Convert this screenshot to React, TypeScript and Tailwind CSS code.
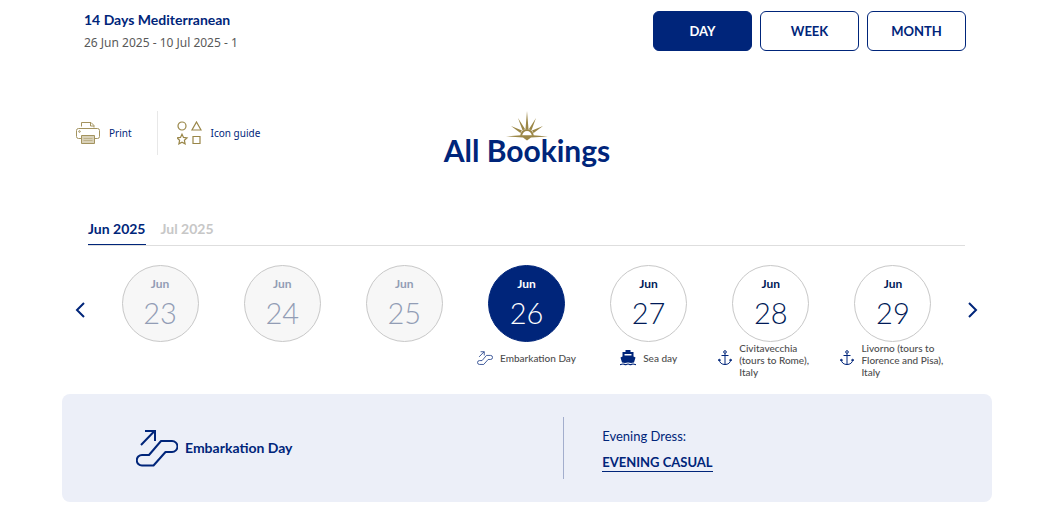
import React, { useState } from "react";

type IconProps = { className?: string };

function PrinterIcon({ className }: IconProps) {
  return (
    <svg className={className} viewBox="0 0 24 23" fill="none" stroke="#a3935f" strokeWidth="1" aria-hidden="true">
      <path d="M5.500 4.500v-4h9.500l3 3v2M14.500 0.500v3.500h3.500" />
      <path d="M5 16.500H2.500a2 2 0 0 1-2-2V8.500a2 2 0 0 1 2-2h19a2 2 0 0 1 2 2v6a2 2 0 0 1-2 2H19" />
      <path d="M5.500 13.500h13v8h-13z" fill="#d9d1b8" />
      <path d="M7.500 16.500h9M7.500 18.500h9" stroke="#bfb38c" />
      <circle cx="3.500" cy="9.500" r="0.800" />
    </svg>
  );
}

function ShapesIcon({ className }: IconProps) {
  return (
    <svg className={className} viewBox="0 0 25 24" fill="none" stroke="#998648" strokeWidth="1.200" aria-hidden="true">
      <circle cx="5" cy="5" r="4" />
      <path d="M19.500 1l4.500 8h-9z" />
      <path d="M5 13.200l1.500 3.200 3.500.5-2.600 2.400.7 3.600L5 21.200l-3.100 1.700.7-3.600L0 16.900l3.500-.5z" />
      <path d="M16 15.500h7v7h-7z" />
    </svg>
  );
}

function SunIcon({ className }: IconProps) {
  return (
    <svg className={className} viewBox="0 0 42 30" fill="#9b8747" aria-hidden="true">
      <path d="M0 25.500L15 24.300h12l15 1.200-17 1-4 3-4-3z" />
      <path d="M21 0l1.500 18h-3zM12 7l7 11-2.400 1.400zM30 7l-7 11 2.400 1.400zM5 15l11 4.500-1.600 2.600zM37 15l-11 4.500 1.600 2.600z" />
      <path d="M15.200 24.800a5.800 5.800 0 0 1 11.600 0" fill="none" stroke="#9b8747" strokeWidth="2" />
    </svg>
  );
}

function EscalatorIcon({ className }: IconProps) {
  return (
    <svg className={className} viewBox="0 0 42 38" fill="none" stroke="#00257a" strokeWidth="2" aria-hidden="true">
      <path d="M5 16L18.500 2M9 2h10v10" />
      <path d="M25 12h11a5 5 0 0 1 0 11h-6.500L17.500 36.500H6A5 5 0 0 1 6 26h7z" strokeLinejoin="round" />
    </svg>
  );
}

function ShipIcon({ className }: IconProps) {
  return (
    <svg className={className} viewBox="0 0 16 16" fill="#00257a" aria-hidden="true">
      <path fillRule="evenodd" d="M5.500 0h5v2h3v4.500l2 1-1.500 5c-1 0-2 .5-3 .5s-2-.5-3-.5-2 .5-3 .5-2-.5-3-.5l-1.500-5 2-1V2h3zM4.500 4v1.500h7V4z" />
      <path d="M0 14.700c1.500 0 2-.7 3-.7s2 .7 3 .7 1-.7 2-.7 1 .7 2 .7 2-.7 3-.7 1.500.7 3 .7" fill="none" stroke="#00257a" strokeWidth="1.200" />
    </svg>
  );
}

function AnchorIcon({ className }: IconProps) {
  return (
    <svg className={className} viewBox="0 0 14 16" fill="none" stroke="#00257a" strokeWidth="1" aria-hidden="true">
      <circle cx="7" cy="2" r="1.300" />
      <path d="M7 3.300V15M3.500 5.500h7M1.200 9.500C1.500 13 4 14.500 7 14.500s5.500-1.500 5.800-5M0 11l1.200-2 1.800 1.500M14 11l-1.200-2-1.800 1.500" />
    </svg>
  );
}

function Chevron({ className, d }: IconProps & { d: string }) {
  return (
    <svg className={className} viewBox="0 0 10 16" fill="none" stroke="#00257a" strokeWidth="2" aria-hidden="true">
      <path d={d} />
    </svg>
  );
}

type Day = { date: number; past?: boolean; label?: string; icon?: React.ReactNode };

const days: Day[] = [
  { date: 23, past: true },
  { date: 24, past: true },
  { date: 25, past: true },
  { date: 26, label: "Embarkation Day", icon: <EscalatorIcon className="h-[14px] w-4" /> },
  { date: 27, label: "Sea day", icon: <ShipIcon className="size-4" /> },
  { date: 28, label: "Civitavecchia (tours to Rome), Italy", icon: <AnchorIcon className="h-4 w-[14px]" /> },
  { date: 29, label: "Livorno (tours to Florence and Pisa), Italy", icon: <AnchorIcon className="h-4 w-[14px]" /> },
];

const views = ["DAY", "WEEK", "MONTH"];
const months = ["Jun 2025", "Jul 2025"];

function dayTone(day: Day, selected: boolean) {
  if (selected) return "border-[#00257a] bg-[#00257a] text-white";
  if (day.past) return "border-[#c8c8c8] bg-[#f7f7f7] text-[#929db5]";
  return "border-[#c8c8c8] bg-white text-[#001a57]";
}

export default function App() {
  const [view, setView] = useState("DAY");
  const [month, setMonth] = useState("Jun 2025");
  const [selected, setSelected] = useState(26);

  return (
    <main className="bg-white pr-[59px] pl-[62px] font-['Lato',sans-serif] text-[#00257a]">
      <header className="flex items-start justify-between pt-[11px] pr-[26px] pl-[22px]">
        <div>
          <h2 className="text-[14px] leading-[18px] font-bold">14 Days Mediterranean</h2>
          <p className="mt-1 font-['Noto_Sans',sans-serif] text-[12px] leading-5 text-[#595959]">26 Jun 2025 - 10 Jul 2025 - 1</p>
        </div>
        <div className="flex gap-2">
          {views.map((v) => (
            <button
              key={v}
              type="button"
              aria-pressed={view === v}
              onClick={() => setView(v)}
              className={`h-10 w-[99px] rounded-md border border-[#00257a] text-[13px] leading-5 font-bold ${view === v ? "bg-[#00257a] text-white" : "bg-white"}`}
            >
              {v}
            </button>
          ))}
        </div>
      </header>

      <section className="mt-[58px] grid grid-cols-[1fr_auto_1fr] items-start">
        <div className="flex h-[44px] pl-[14px] font-['Noto_Sans',sans-serif] text-[10px]">
          <button type="button" className="flex items-center gap-[9px] border-r border-[#e8e8e8] pr-[25px]">
            <PrinterIcon className="h-[23px] w-6" />
            Print
          </button>
          <button type="button" className="flex items-center gap-[9px] pl-[19px]">
            <ShapesIcon className="h-6 w-[25px]" />
            Icon guide
          </button>
        </div>
        <div className="flex flex-col items-center">
          <SunIcon className="h-[30px] w-[42px]" />
          <h1 className="-mt-2 text-[30px] leading-[34px] font-bold">All Bookings</h1>
        </div>
      </section>

      <nav className="mt-[52px] mr-[27px] ml-[26px] flex gap-[15px] border-b border-[#dedede]">
        {months.map((m) => (
          <button
            key={m}
            type="button"
            onClick={() => setMonth(m)}
            className={`h-[26px] border-b pb-[5px] text-[14px] leading-5 font-bold ${month === m ? "border-[#00257a]" : "border-transparent text-[#c7c7c7]"}`}
          >
            {m}
          </button>
        ))}
      </nav>

      <section className="mt-[19px] flex items-start">
        <button type="button" aria-label="Previous days" className="mt-[37px] flex w-[37px] pl-[13px]">
          <Chevron className="h-4 w-[10px]" d="M9 1L2 8l7 7" />
        </button>
        <div className="grid min-h-[129px] flex-1 grid-cols-7">
          {days.map((day) => (
            <div key={day.date} className="flex flex-col items-center">
              <button
                type="button"
                onClick={() => setSelected(day.date)}
                className={`flex size-[77px] shrink-0 flex-col items-center rounded-full border pt-[9px] ${dayTone(day, selected === day.date)}`}
              >
                <span className="text-[12px] leading-[18px] font-bold">Jun</span>
                <span className="mt-[2px] text-[29px] leading-9 font-light">{day.date}</span>
              </button>
              {day.label && (
                <div className="flex items-start justify-center gap-[7px] text-[10px] leading-3 font-medium text-[#4d4d4d]">
                  <span className="flex h-8 shrink-0 items-center">{day.icon}</span>
                  <span className="flex min-h-8 max-w-[84px] items-center">{day.label}</span>
                </div>
              )}
            </div>
          ))}
        </div>
        <button type="button" aria-label="Next days" className="mt-[37px] flex w-[38px] justify-end pr-[14px]">
          <Chevron className="h-4 w-[10px]" d="M1 1l7 7-7 7" />
        </button>
      </section>

      <section className="grid h-[108px] grid-cols-[27fr_23fr] items-center rounded-lg bg-[#eceff8]">
        <div className="flex h-[62px] items-center gap-[7px] border-r border-[#a3aecd] pl-[74px]">
          <EscalatorIcon className="h-[38px] w-[42px]" />
          <h3 className="text-[14px] leading-5 font-bold">Embarkation Day</h3>
        </div>
        <div className="flex flex-col items-start gap-2 pt-[2px] pl-[38px] text-[13px]">
          <p className="leading-5">Evening Dress:</p>
          <a href="#dress-code" className="border-b border-[#00257a] leading-[17px] font-bold">EVENING CASUAL</a>
        </div>
      </section>
    </main>
  );
}
